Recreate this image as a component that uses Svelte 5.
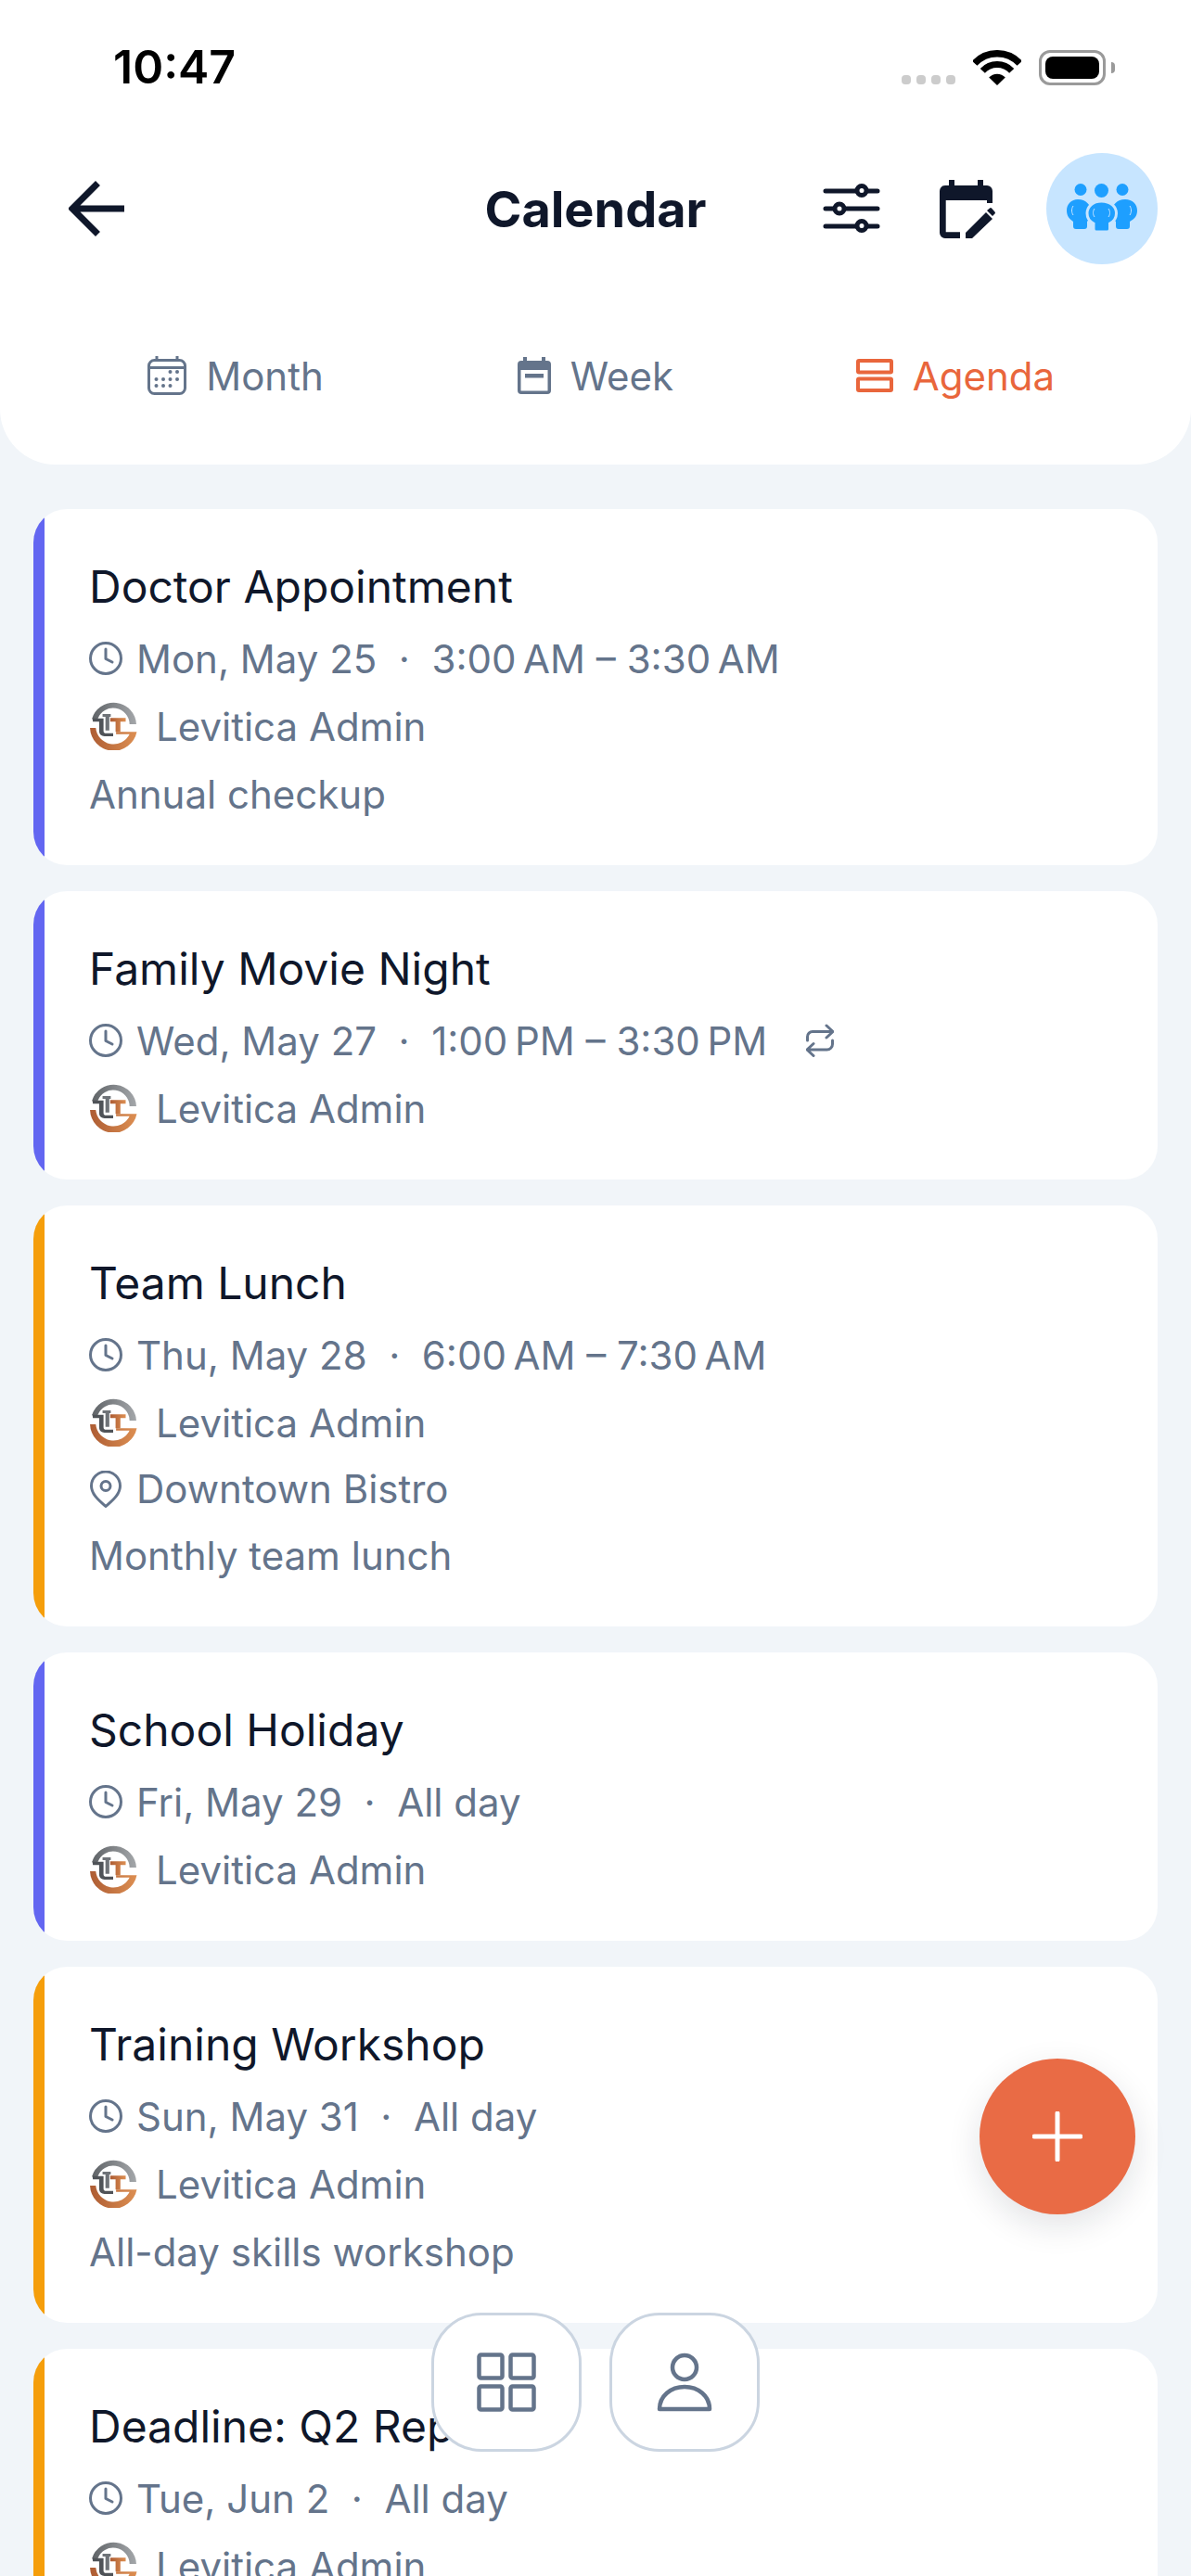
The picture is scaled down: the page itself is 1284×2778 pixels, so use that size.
<script>
	const PURPLE = '#6366f1';
	const AMBER = '#f59e0b';

	const tabs = [
		{ id: 'month', label: 'Month' },
		{ id: 'week', label: 'Week' },
		{ id: 'agenda', label: 'Agenda' }
	];

	const events = [
		{ title: 'Doctor Appointment', date: 'Mon, May 25', time: '3:00\u202fAM – 3:30\u202fAM', color: PURPLE, note: 'Annual checkup' },
		{ title: 'Family Movie Night', date: 'Wed, May 27', time: '1:00\u202fPM – 3:30\u202fPM', color: PURPLE, repeats: true },
		{ title: 'Team Lunch', date: 'Thu, May 28', time: '6:00\u202fAM – 7:30\u202fAM', color: AMBER, place: 'Downtown Bistro', note: 'Monthly team lunch' },
		{ title: 'School Holiday', date: 'Fri, May 29', time: 'All day', color: PURPLE },
		{ title: 'Training Workshop', date: 'Sun, May 31', time: 'All day', color: AMBER, note: 'All-day skills workshop' },
		{ title: 'Deadline: Q2 Report', date: 'Tue, Jun 2', time: 'All day', color: AMBER }
	];
</script>

<div class="screen">
	<header class="top">
		<div class="status">
			<span class="clock">10:47</span>
			<div class="status-icons">
				<span class="signal"><i></i><i></i><i></i><i></i></span>
				<svg class="wifi" viewBox="0 0 52 38" width="52" height="38">
					<path d="M1.700 14.300a33.250 33.250 0 0 1 48.600 0" fill="none" stroke="#000" stroke-width="7.500" />
					<path d="M10.300 22.300a21.500 21.500 0 0 1 31.400 0" fill="none" stroke="#000" stroke-width="7" />
					<path d="M26 38 17.200 29.500a12 12 0 0 1 17.600 0Z" fill="#000" />
				</svg>
				<span class="battery"><b></b></span>
			</div>
		</div>

		<div class="bar">
			<button class="back" aria-label="Back">
				<svg viewBox="0 0 60 60" width="60" height="60" fill="none" stroke="#0f172a" stroke-width="7" stroke-linecap="square">
					<path d="M57 30H6M29 5 4 30l25 25" />
				</svg>
			</button>
			<h1>Calendar</h1>
			<div class="actions">
				<svg viewBox="0 0 62 54" width="62" height="54" fill="none" stroke="#0f172a" stroke-width="5" stroke-linecap="round">
					<path d="M3 8h56M3 27h56M3 46h56" />
					<circle cx="42" cy="7.500" r="5" fill="#fff" />
					<circle cx="18" cy="27" r="5" fill="#fff" />
					<circle cx="42" cy="45.500" r="5" fill="#fff" />
				</svg>
				<svg viewBox="0 0 60 63" width="60" height="63" fill="#0f172a">
					<path d="M10 0h6v6h25V0h6v6h4a6 6 0 0 1 6 6v13h-6v-3H6.700v34.300H22V63H6a6 6 0 0 1-6-6V12a6 6 0 0 1 6-6h4Z" />
					<path d="M28 57 50 35l7 7-22 21h-7ZM51 33l3-2.500a1.500 1.500 0 0 1 2 0l3.500 4a1.500 1.500 0 0 1 0 2L57 39Z" />
				</svg>
				<span class="team">
					<svg viewBox="0 0 76 54" width="76" height="54" fill="#1e9fff">
						<circle cx="15" cy="6.500" r="6.500" />
						<circle cx="37.500" cy="7.500" r="7.500" />
						<circle cx="60" cy="6.500" r="6.500" />
						<path d="M12 17c9 0 14 6 14 13 0 6-3 10-4 11v5c0 2-1 3-3 3h-9c-2 0-3-1-3-3v-5C3 38 0 35 0 29c0-7 5-12 12-12Z" />
						<path d="M63 17c-9 0-14 6-14 13 0 6 3 10 4 11v5c0 2 1 3 3 3h9c2 0 3-1 3-3v-5c5-3 8-6 8-12 0-7-5-12-13-12Z" />
						<path d="M37.500 19c10 0 16 6 16 13 0 5-3 9-7 11v6c0 2-1 3-3 3H32c-2 0-3-1-3-3v-6c-4-2-7-6-7-11 0-7 6-13 15.500-13Z" stroke="#c7e5ff" stroke-width="3" />
						<path d="M7 24c-2 3-2 7 0 10M68 24c2 3 2 7 0 10M30 27c-2 3-2 6 0 9M45 27c2 3 2 6 0 9" fill="none" stroke="#c7e5ff" stroke-width="1" />
					</svg>
				</span>
			</div>
		</div>

		<nav class="tabs">
			{#each tabs as tab}
				<button class="tab" class:active={tab.id === 'agenda'}>
					{#if tab.id === 'month'}
						<svg viewBox="0 0 42 42" width="42" height="42" fill="none" stroke="currentColor" stroke-width="3">
							<rect x="1.500" y="4.500" width="39" height="36" rx="6" />
							<path d="M2 12.500h38M10 0v5M32 0v5" />
							<g fill="currentColor" stroke="none">
								<circle cx="24.500" cy="17" r="2" /><circle cx="32" cy="17" r="2" />
								<circle cx="9.500" cy="25" r="2" /><circle cx="17" cy="25" r="2" /><circle cx="24.500" cy="25" r="2" /><circle cx="32" cy="25" r="2" />
								<circle cx="9.500" cy="32" r="2" /><circle cx="17" cy="32" r="2" /><circle cx="24.500" cy="32" r="2" />
							</g>
						</svg>
					{:else if tab.id === 'week'}
						<svg viewBox="0 0 36 40" width="36" height="40">
							<path d="M6 0h4v4h16V0h4v4h2a4 4 0 0 1 4 4v28a4 4 0 0 1-4 4H4a4 4 0 0 1-4-4V8a4 4 0 0 1 4-4h2Zm-2.500 14v22.500h29V14Z" fill="currentColor" />
							<rect x="8" y="18" width="20" height="4.500" fill="currentColor" />
						</svg>
					{:else}
						<svg viewBox="0 0 40 36" width="40" height="36" fill="none" stroke="currentColor" stroke-width="4">
							<rect x="2" y="2" width="36" height="12.500" rx="1" />
							<rect x="2" y="21.500" width="36" height="12.500" rx="1" />
						</svg>
					{/if}
					<span>{tab.label}</span>
				</button>
			{/each}
		</nav>
	</header>

	<main class="list">
		{#each events as event}
			<article class="card" style="--accent: {event.color}">
				<h2>{event.title}</h2>
				<div class="rows">
					<div class="row">
						<svg viewBox="0 0 36 36" width="36" height="36" fill="none" stroke="currentColor" stroke-width="3" stroke-linecap="round" stroke-linejoin="round">
							<circle cx="18" cy="18" r="16.500" />
							<path d="M18 8v10.500l7 3.500" />
						</svg>
						<span class="when">{event.date}<span class="dot">·</span>{event.time}</span>
						{#if event.repeats}
							<svg class="repeat" viewBox="0 0 30 36" width="30" height="36" fill="none" stroke="currentColor" stroke-width="3" stroke-linecap="round" stroke-linejoin="round">
								<path d="M1.500 18v-4a5.500 5.500 0 0 1 5.500-5.500h21.500M22 2l7 6.500-7 6.500M28.500 18v4a6 6 0 0 1-6 6H1.500M8 21.500 1 28l7 6.500" />
							</svg>
						{/if}
					</div>
					<div class="row owner">
						<svg viewBox="0 0 50 50" width="52" height="52">
							<defs>
								<linearGradient id="steel" x1="0" y1="0" x2="1" y2="0">
									<stop offset="0" stop-color="#5f6367" />
									<stop offset="1" stop-color="#a4a7aa" />
								</linearGradient>
								<linearGradient id="copper" x1="0" y1="0" x2="1" y2="0">
									<stop offset="0" stop-color="#ad5c33" />
									<stop offset="1" stop-color="#dd8f52" />
								</linearGradient>
							</defs>
							<path d="M3 17.500A23.500 23.500 0 0 1 49 23h-7A17 17 0 0 0 9 17.500Z" fill="url(#steel)" />
							<path d="M1 27h6a18.500 18.500 0 0 0 35 6.500H28V31h21.500A24.500 24.500 0 0 1 1 27Z" fill="url(#copper)" />
							<path d="M3.500 17H15V30c0 2 1 2.500 3 2.500h7V35.500h-9c-3 0-5.500-2-5.500-5.500v-9.500H4Z" fill="#4f5358" />
							<path d="M14 12.500h8.500V15.500h-1.500v14h-4v-14h-3Z" fill="#6f7378" />
							<path d="M22 16.500h16v4h-5.500V31h-5V20.500H22Z" fill="url(#copper)" />
						</svg>
						<span>Levitica Admin</span>
					</div>
					{#if event.place}
						<div class="row place">
							<svg viewBox="0 0 36 40" width="36" height="40" fill="none" stroke="currentColor" stroke-width="3" stroke-linejoin="round">
								<path d="M18 38.500C12 33 2.500 26 2.500 16.500a15.500 15.500 0 0 1 31 0C33.500 26 24 33 18 38.500Z" />
								<circle cx="18" cy="16.500" r="5" />
							</svg>
							<span>{event.place}</span>
						</div>
					{/if}
					{#if event.note}
						<div class="row"><span>{event.note}</span></div>
					{/if}
				</div>
			</article>
		{/each}
	</main>

	<button class="fab" aria-label="Add event">
		<svg viewBox="0 0 54 54" width="54" height="54" stroke="#fff" stroke-width="5" stroke-linecap="round">
			<path d="M27 2v50M2 27h50" />
		</svg>
	</button>

	<nav class="dock">
		<button aria-label="Dashboard">
			<svg viewBox="0 0 64 64" width="64" height="64" fill="none" stroke="#64748b" stroke-width="4.500" stroke-linejoin="round">
				<rect x="2.500" y="2.500" width="25" height="25" rx="2" />
				<rect x="36.500" y="2.500" width="25" height="25" rx="2" />
				<rect x="2.500" y="36.500" width="25" height="25" rx="2" />
				<rect x="36.500" y="36.500" width="25" height="25" rx="2" />
			</svg>
		</button>
		<button aria-label="Profile">
			<svg viewBox="0 0 60 64" width="60" height="64" fill="none" stroke="#64748b" stroke-width="4.500" stroke-linejoin="round">
				<circle cx="30" cy="16" r="13" />
				<path d="M3 61c0-14 12-24 27-24s27 10 27 24Z" />
			</svg>
		</button>
	</nav>
</div>

<style>
	:global(body) {
		background: #f1f5f9;
	}

	.screen {
		position: relative;
		height: 2778px;
		overflow: hidden;
		background: #f1f5f9;
		font-family: Inter, 'Liberation Sans', sans-serif;
	}

	button {
		padding: 0;
		border: 0;
		background: none;
		font: inherit;
		cursor: pointer;
	}

	.top {
		height: 501px;
		box-sizing: border-box;
		border-radius: 0 0 60px 60px;
		background: #fff;
	}

	.status {
		display: flex;
		align-items: flex-start;
		justify-content: space-between;
		height: 165px;
		box-sizing: border-box;
		padding: 41px 92px 0 122px;
	}

	.clock {
		font-size: 50px;
		font-weight: 600;
		line-height: 62px;
		color: #000;
	}

	.status-icons {
		display: flex;
		align-items: flex-start;
		padding-top: 13px;
	}

	.signal {
		display: flex;
		gap: 6px;
		margin-top: 27px;
		margin-right: 19px;
	}

	.signal i {
		width: 10px;
		height: 10px;
		border-radius: 4px;
		background: #cccccc;
	}

	.wifi {
		margin-right: 19px;
	}

	.battery {
		position: relative;
		display: flex;
		box-sizing: border-box;
		width: 72px;
		height: 38px;
		padding: 4px;
		border: 3px solid #9a9a9a;
		border-radius: 12px;
	}

	.battery::after {
		content: '';
		position: absolute;
		top: 10px;
		right: -13px;
		width: 4px;
		height: 12px;
		border-radius: 0 5px 5px 0;
		background: #9a9a9a;
	}

	.battery b {
		flex: 1;
		border-radius: 8px;
		background: #000;
	}

	.bar {
		position: relative;
		display: flex;
		align-items: center;
		justify-content: space-between;
		height: 120px;
		padding: 0 36px 0 74px;
	}

	.back {
		display: flex;
	}

	h1 {
		position: absolute;
		left: 0;
		right: 0;
		margin: 0;
		text-align: center;
		font-size: 54px;
		font-weight: 700;
		color: #0f172a;
		pointer-events: none;
	}

	.actions {
		position: relative;
		display: flex;
		align-items: center;
		gap: 64px;
	}

	.team {
		display: flex;
		align-items: center;
		justify-content: center;
		width: 120px;
		height: 120px;
		margin-left: -9px;
		border-radius: 50%;
		background: #c7e5ff;
	}

	.tabs {
		display: flex;
		padding: 96px 60px 0 60px;
	}

	.tab {
		flex: 1;
		display: flex;
		align-items: center;
		justify-content: center;
		gap: 21px;
		height: 48px;
		font-size: 42px;
		color: #64748b;
	}

	.tab.active {
		color: #e9663c;
	}

	.list {
		display: flex;
		flex-direction: column;
		gap: 28px;
		padding: 48px 36px 0;
	}

	.card {
		padding: 48px 48px 48px 60px;
		border-radius: 36px;
		background: linear-gradient(90deg, var(--accent) 12px, #fff 12px);
	}

	h2 {
		margin: 0 0 12px;
		font-size: 48px;
		font-weight: 400;
		line-height: 72px;
		color: #0f172a;
	}

	.rows {
		display: flex;
		flex-direction: column;
		gap: 15px;
	}

	.row {
		display: flex;
		align-items: center;
		gap: 15px;
		height: 58px;
		font-size: 42px;
		color: #64748b;
	}

	.owner {
		gap: 20px;
	}

	.place {
		height: 55px;
	}

	.dot {
		margin: 0 23.5px;
	}

	.repeat {
		margin-left: 27px;
	}

	.fab {
		position: absolute;
		top: 2220px;
		right: 60px;
		display: flex;
		align-items: center;
		justify-content: center;
		width: 168px;
		height: 168px;
		border-radius: 50%;
		background: #e96b45;
		box-shadow: 0 12px 36px rgba(15, 23, 42, 0.12);
	}

	.dock {
		position: absolute;
		left: 0;
		right: 0;
		bottom: 134px;
		display: flex;
		justify-content: center;
		gap: 30px;
	}

	.dock button {
		display: flex;
		align-items: center;
		justify-content: center;
		box-sizing: border-box;
		width: 162px;
		height: 150px;
		border: 3px solid #cbd5e1;
		border-radius: 54px;
		background: #fff;
	}
</style>
